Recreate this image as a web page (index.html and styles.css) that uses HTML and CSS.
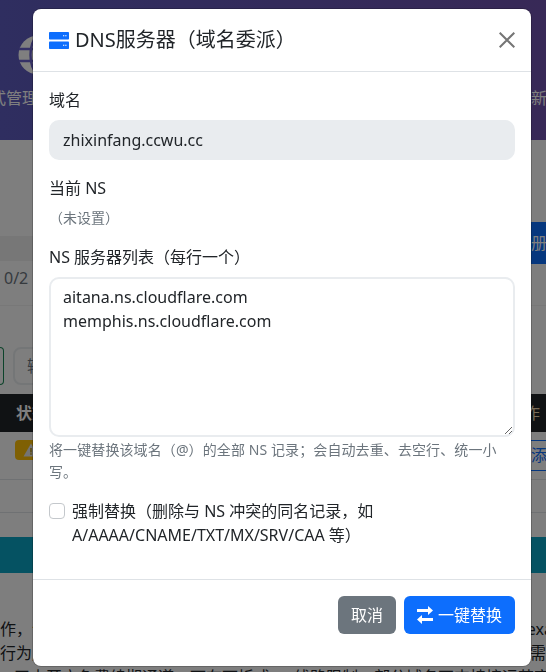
FILE: index.html
```html
<!DOCTYPE html>
<html lang="zh-CN">
<head>
<meta charset="utf-8">
<title>DNS服务器（域名委派）</title>
<link rel="stylesheet" href="styles.css">
</head>
<body>
<div class="page">
  <header class="hero">
    <div class="hero-item">
      <svg class="globe" viewBox="0 0 40 40" aria-hidden="true"><circle cx="20" cy="20" r="19.5" fill="#fff"/><path d="M1 14h38M1 26h38M20 .5C10 8 10 32 20 39.5M20 .5C30 8 30 32 20 39.5" fill="none" stroke="#6a62cc" stroke-width="2.4"/></svg>
      <span class="hero-text">方式管理</span>
    </div>
    <div class="hero-end">新增</div>
  </header>
  <div class="gap-a"></div>
  <div class="band"><span class="btn-blue">册</span></div>
  <div class="stat"><span>0/2</span></div>
  <div class="controls"><span class="btn-green"></span><span class="fake-input">输入</span></div>
  <div class="thead"><span>状态</span><span class="thead-end">操作</span></div>
  <div class="trow trow-a">
    <span class="badge"><svg viewBox="0 0 16 16" aria-hidden="true"><path d="M8 1.5 15.5 14.500H.5Z" fill="#e8e8e8"/><path d="M7.300 6h1.400v4.500H7.300zM7.300 11.300h1.400v1.400H7.300z" fill="#b08a00"/></svg></span>
    <span class="link-btn">添</span>
  </div>
  <div class="trow trow-b"></div>
  <div class="gap-b"></div>
  <div class="teal"></div>
  <div class="notes">
    <p class="note"><span>作，<em>请</em></span><span class="note-end">exa</span></p>
    <p class="note"><span>行为,</span><span>需</span></p>
    <p class="note note-last"><span>天内开启免费续期通道，可在下拆式</span><span>线路限制，部分域名不支持接运营商来</span></p>
  </div>
</div>

<div class="backdrop"></div>

<div class="modal-wrap">
  <div class="modal">
    <div class="modal-head">
      <h5 class="modal-title">
        <svg class="server" viewBox="0 0 20 17" aria-hidden="true">
          <rect x="0" y="0" width="20" height="7.500" rx="0.800" fill="#0d6efd"/>
          <rect x="0" y="9.500" width="20" height="7.500" rx="0.800" fill="#0d6efd"/>
          <path d="M14 3.200h1.300v1.100H14zM16.200 3.200h1.300v1.100h-1.300zM14 12.700h1.300v1.100H14zM16.200 12.700h1.300v1.100h-1.300z" fill="#fff"/>
        </svg>
        <span>DNS服务器（域名委派）</span>
      </h5>
      <button class="close" type="button" aria-label="关闭">
        <svg viewBox="0 0 16 16" aria-hidden="true"><path d="M.7.700l14.600 14.600M15.300.700.700 15.300" fill="none" stroke="#757575" stroke-width="2"/></svg>
      </button>
    </div>
    <div class="modal-body">
      <div class="field">
        <label class="label">域名</label>
        <input class="control readonly" type="text" value="zhixinfang.ccwu.cc" readonly>
      </div>
      <div class="field">
        <label class="label">当前 NS</label>
        <div class="muted">（未设置）</div>
      </div>
      <div class="field">
        <label class="label">NS 服务器列表（每行一个）</label>
        <textarea class="control area" spellcheck="false">aitana.ns.cloudflare.com
memphis.ns.cloudflare.com</textarea>
        <div class="help">将一键替换该域名（@）的全部 NS 记录；会自动去重、去空行、统一小写。</div>
      </div>
      <label class="check">
        <input class="check-box" type="checkbox">
        <span>强制替换（删除与 NS 冲突的同名记录，如 A/AAAA/CNAME/TXT/MX/SRV/CAA 等）</span>
      </label>
    </div>
    <div class="modal-foot">
      <button class="btn btn-gray" type="button">取消</button>
      <button class="btn btn-primary" type="button">
        <svg class="swap" viewBox="0 0 16 18" aria-hidden="true"><path d="M0 3h11V0l5 4.500L11 9V6H0zM16 12H5V9l-5 4.500L5 18v-3h11z" fill="#fff"/></svg>
        <span>一键替换</span>
      </button>
    </div>
  </div>
</div>
</body>
</html>
```
FILE: styles.css
```css
* { box-sizing: border-box; }
html, body { margin: 0; height: 100%; overflow: hidden; }
body {
  font-family: "Noto Sans", "Noto Sans CJK SC", sans-serif;
  font-size: 16px;
  line-height: 1.5;
  color: #212529;
  background: #fcfcfc;
}
.page { height: 672px; overflow: hidden; }

.hero {
  height: 140px;
  background: linear-gradient(90deg, #5e5cc0, #7052ae);
  display: flex;
  justify-content: space-between;
  color: #fff;
}
.hero-item {
  display: flex;
  flex-direction: column;
  align-items: flex-end;
  padding-top: 35px;
  width: 48px;
}
.globe { width: 40px; height: 40px; margin: 0 -10px 11px 0; flex: none; }
.hero-text { white-space: nowrap; margin-right: 10px; }
.hero-end { padding-top: 86px; margin-right: -16px; width: 31px; white-space: nowrap; overflow: hidden; }

.gap-a { height: 96px; }
.band { height: 25px; background: #eeeeee; display: flex; justify-content: flex-end; }
.btn-blue {
  height: 42px;
  margin-top: -14px;
  padding: 9px 0 0 0;
  width: 15px;
  overflow: hidden;
  white-space: nowrap;
  background: #0d6efd;
  color: #fff;
}
.stat { height: 45px; border-bottom: 1px solid #f0f0f0; padding: 5px 0 0 4px; color: #6c757d; }
.controls { height: 88px; display: flex; gap: 9px; padding-top: 41px; }
.btn-green { width: 4px; height: 38px; border: 1px solid #198754; border-left: 0; border-radius: 0 6px 6px 0; }
.fake-input {
  width: 60px;
  height: 38px;
  border: 2px solid #e9ecef;
  border-radius: 8px;
  padding: 5px 12px;
  color: #6c757d;
}
.thead {
  height: 38px;
  background: #212529;
  color: #fff;
  font-weight: 700;
  display: flex;
  justify-content: space-between;
  padding: 7px 0 0 16px;
}
.thead-end { margin-right: 6px; white-space: nowrap; color: #f0d8b0; font-weight: 400; }
.trow { border-bottom: 1px solid #dee2e6; display: flex; justify-content: space-between; }
.trow-a { height: 48px; padding-top: 8px; }
.trow-b { height: 33px; }
.badge {
  margin-left: 15px;
  width: 40px;
  height: 20px;
  background: #ffc107;
  border-radius: 4px;
  display: flex;
  padding: 2px 0 0 8px;
}
.badge svg { width: 16px; height: 16px; }
.link-btn {
  height: 31px;
  width: 15px;
  overflow: hidden;
  white-space: nowrap;
  border-top: 1px solid #0d6efd;
  border-bottom: 1px solid #0d6efd;
  color: #0d6efd;
  line-height: 29px;
}
.gap-b { height: 24px; }
.teal { height: 36px; background: #0aa5c4; }
.notes { padding-top: 44px; }
.note { margin: 0; display: flex; justify-content: space-between; white-space: nowrap; height: 24px; }
.note em { font-style: normal; color: #e08a30; }
.note-end { margin-right: -7px; }
.note-last { justify-content: flex-start; gap: 24px; padding-left: 14px; }

.backdrop { position: fixed; inset: 0; background: rgba(0, 0, 0, .5); }

.modal-wrap { position: fixed; inset: 0; padding: 9px 15px 0 33px; }
.modal {
  width: 498px;
  height: 657px;
  background: #fff;
  border-radius: 8px;
  box-shadow: 0 0 0 1px rgba(0, 0, 0, .2);
  display: flex;
  flex-direction: column;
}
.modal-head {
  height: 63px;
  flex: none;
  border-bottom: 1px solid #dee2e6;
  display: flex;
  align-items: center;
  justify-content: space-between;
  padding: 0 16px;
}
.modal-title { margin: 0; font-size: 20px; font-weight: 400; line-height: 1.5; display: flex; align-items: center; gap: 6px; }
.server { width: 20px; height: 17px; }
.close { border: 0; background: none; padding: 0; width: 16px; height: 16px; display: flex; }
.close svg { width: 16px; height: 16px; }

.modal-body { flex: 1; padding: 16px 16px 0; }
.field { margin-bottom: 16px; }
.label { display: block; margin-bottom: 8px; }
.control {
  display: block;
  width: 100%;
  border: 2px solid #e9ecef;
  border-radius: 10px;
  padding: 6px 12px;
  font: inherit;
  color: #212529;
  outline: 0;
}
.readonly { height: 40px; background: #e9ecef; }
.area { height: 160px; background: #fff; resize: vertical; display: block; }
.muted { font-size: 14px; line-height: 20px; padding-bottom: 1px; color: #6c757d; }
.help { font-size: 14px; line-height: 22px; letter-spacing: .1px; color: #6c757d; margin-top: 2px; }
.check { display: flex; gap: 7px; padding-right: 24px; }
.check-box {
  appearance: none;
  flex: none;
  width: 16px;
  height: 16px;
  margin: 4px 0 0;
  background: #fff;
  border: 1px solid #c4c8cc;
  border-radius: 4px;
}

.modal-foot {
  height: 87px;
  flex: none;
  border-top: 1px solid #dee2e6;
  padding: 16px 16px 0;
  display: flex;
  justify-content: flex-end;
  gap: 8px;
}
.btn {
  height: 38px;
  border: 0;
  border-radius: 6px;
  font: inherit;
  color: #fff;
  padding: 0 13px;
  display: flex;
  align-items: center;
}
.btn-gray { background: #6c757d; }
.btn-primary { background: #0d6efd; gap: 5px; }
.swap { width: 16px; height: 18px; }
```
